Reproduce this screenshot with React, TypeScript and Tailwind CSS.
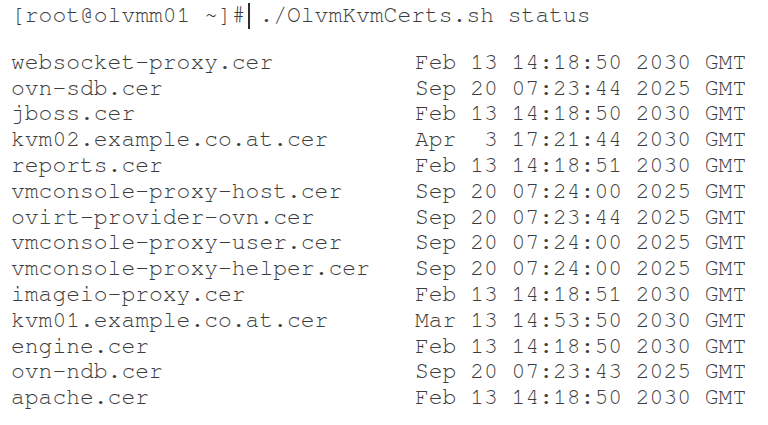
import React from "react";

const rows: [string, string][] = [
  ["websocket-proxy.cer", "Feb 13 14:18:50 2030 GMT"],
  ["ovn-sdb.cer", "Sep 20 07:23:44 2025 GMT"],
  ["jboss.cer", "Feb 13 14:18:50 2030 GMT"],
  ["kvm02.example.co.at.cer", "Apr  3 17:21:44 2030 GMT"],
  ["reports.cer", "Feb 13 14:18:51 2030 GMT"],
  ["vmconsole-proxy-host.cer", "Sep 20 07:24:00 2025 GMT"],
  ["ovirt-provider-ovn.cer", "Sep 20 07:23:44 2025 GMT"],
  ["vmconsole-proxy-user.cer", "Sep 20 07:24:00 2025 GMT"],
  ["vmconsole-proxy-helper.cer", "Sep 20 07:24:00 2025 GMT"],
  ["imageio-proxy.cer", "Feb 13 14:18:51 2030 GMT"],
  ["kvm01.example.co.at.cer", "Mar 13 14:53:50 2030 GMT"],
  ["engine.cer", "Feb 13 14:18:50 2030 GMT"],
  ["ovn-ndb.cer", "Sep 20 07:23:43 2025 GMT"],
  ["apache.cer", "Feb 13 14:18:50 2030 GMT"],
];

export default function App() {
  return (
    <div
      className="w-[768px] h-[425px] bg-white text-[#3c3c3c] overflow-hidden pl-[11px] pt-[3px] text-[23px] leading-[25.8px] whitespace-pre"
      style={{ fontFamily: '"Nimbus Mono PS", "Nimbus Mono L", FreeMono, "Liberation Mono", "Courier New", monospace' }}
    >
      <div className="flex">
        <span>[root@olvmm01 ~]#</span>
        <span className="relative">
          <span className="absolute left-[2px] top-[0px] h-[26px] w-[2px] bg-[#2e2e2e]" />
          {" ./OlvmKvmCerts.sh status"}
        </span>
      </div>
      <div className="mt-[21px] flex flex-col">
        {rows.map(([name, date]) => (
          <div key={name} className="flex">
            <span className="w-[404px] shrink-0">{name}</span>
            <span>{date}</span>
          </div>
        ))}
      </div>
    </div>
  );
}
